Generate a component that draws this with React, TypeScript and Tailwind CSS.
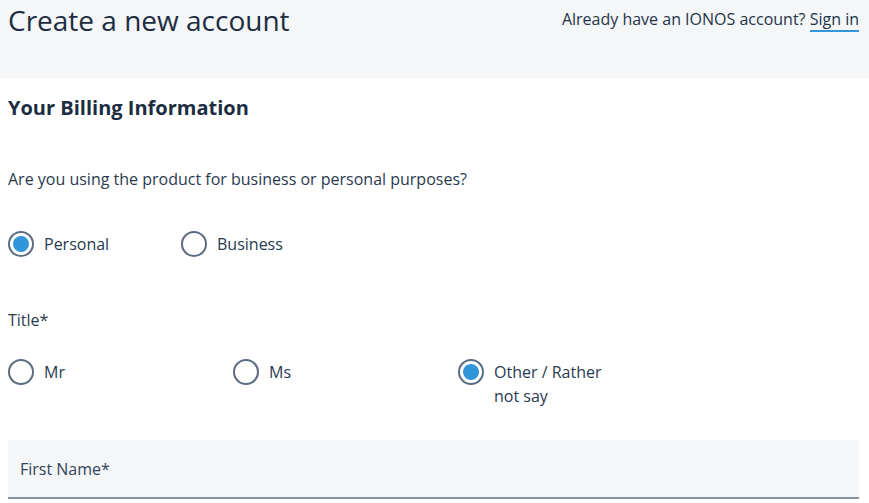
import * as React from 'react'

function Radio({ label, checked }: { label: React.ReactNode; checked?: boolean }) {
  return (
    <label className="flex items-start gap-[10px]">
      <span className="flex h-[26px] w-[26px] shrink-0 items-center justify-center rounded-full border-2 border-[#5b6b80] bg-white">
        {checked && <span className="h-[16px] w-[16px] rounded-full bg-[#3196d9]" />}
      </span>
      <span className="pt-px text-[16px] leading-[24px] text-[#2a3a4f]">{label}</span>
    </label>
  )
}

export default function App() {
  return (
    <div className="min-h-[503px] bg-white font-['Open_Sans',sans-serif] text-[#1c2b3e]">
      <header className="flex h-[78px] items-start justify-between bg-[#f4f6f8] pl-2 pr-[10px]">
        <h1 className="mt-[1px] text-[28px] leading-[38px] text-[#1c2d42]">Create a new account</h1>
        <p className="mt-[7px] text-[16px] leading-[24px] text-[#24344a]">
          Already have an IONOS account?{' '}
          <a className="border-b-2 border-[#3196d9]">Sign in</a>
        </p>
      </header>
      <main className="pl-2 pr-[10px]">
        <h2 className="mt-[16px] text-[20px] font-bold leading-[28px] text-[#1c2d42]">
          Your Billing Information
        </h2>
        <p className="mt-[45px] text-[16px] leading-[24px] text-[#2a3a4f]">
          Are you using the product for business or personal purposes?
        </p>
        <div className="mt-[40px] flex">
          <div className="w-[173px]">
            <Radio label="Personal" checked />
          </div>
          <Radio label="Business" />
        </div>
        <p className="mt-[51px] text-[16px] leading-[24px] text-[#2a3a4f]">Title*</p>
        <div className="mt-[27px] flex">
          <div className="w-[225px]">
            <Radio label="Mr" />
          </div>
          <div className="w-[225px]">
            <Radio label="Ms" />
          </div>
          <div className="w-[160px]">
            <Radio label={<>Other / Rather<br />not say</>} checked />
          </div>
        </div>
        <div className="mt-[32px] flex h-[59px] items-center rounded-t-[3px] border-b-2 border-[#8a94a1] bg-[#f4f6f8] px-3">
          <span className="text-[16px] text-[#33435a]">First Name*</span>
        </div>
      </main>
    </div>
  )
}
